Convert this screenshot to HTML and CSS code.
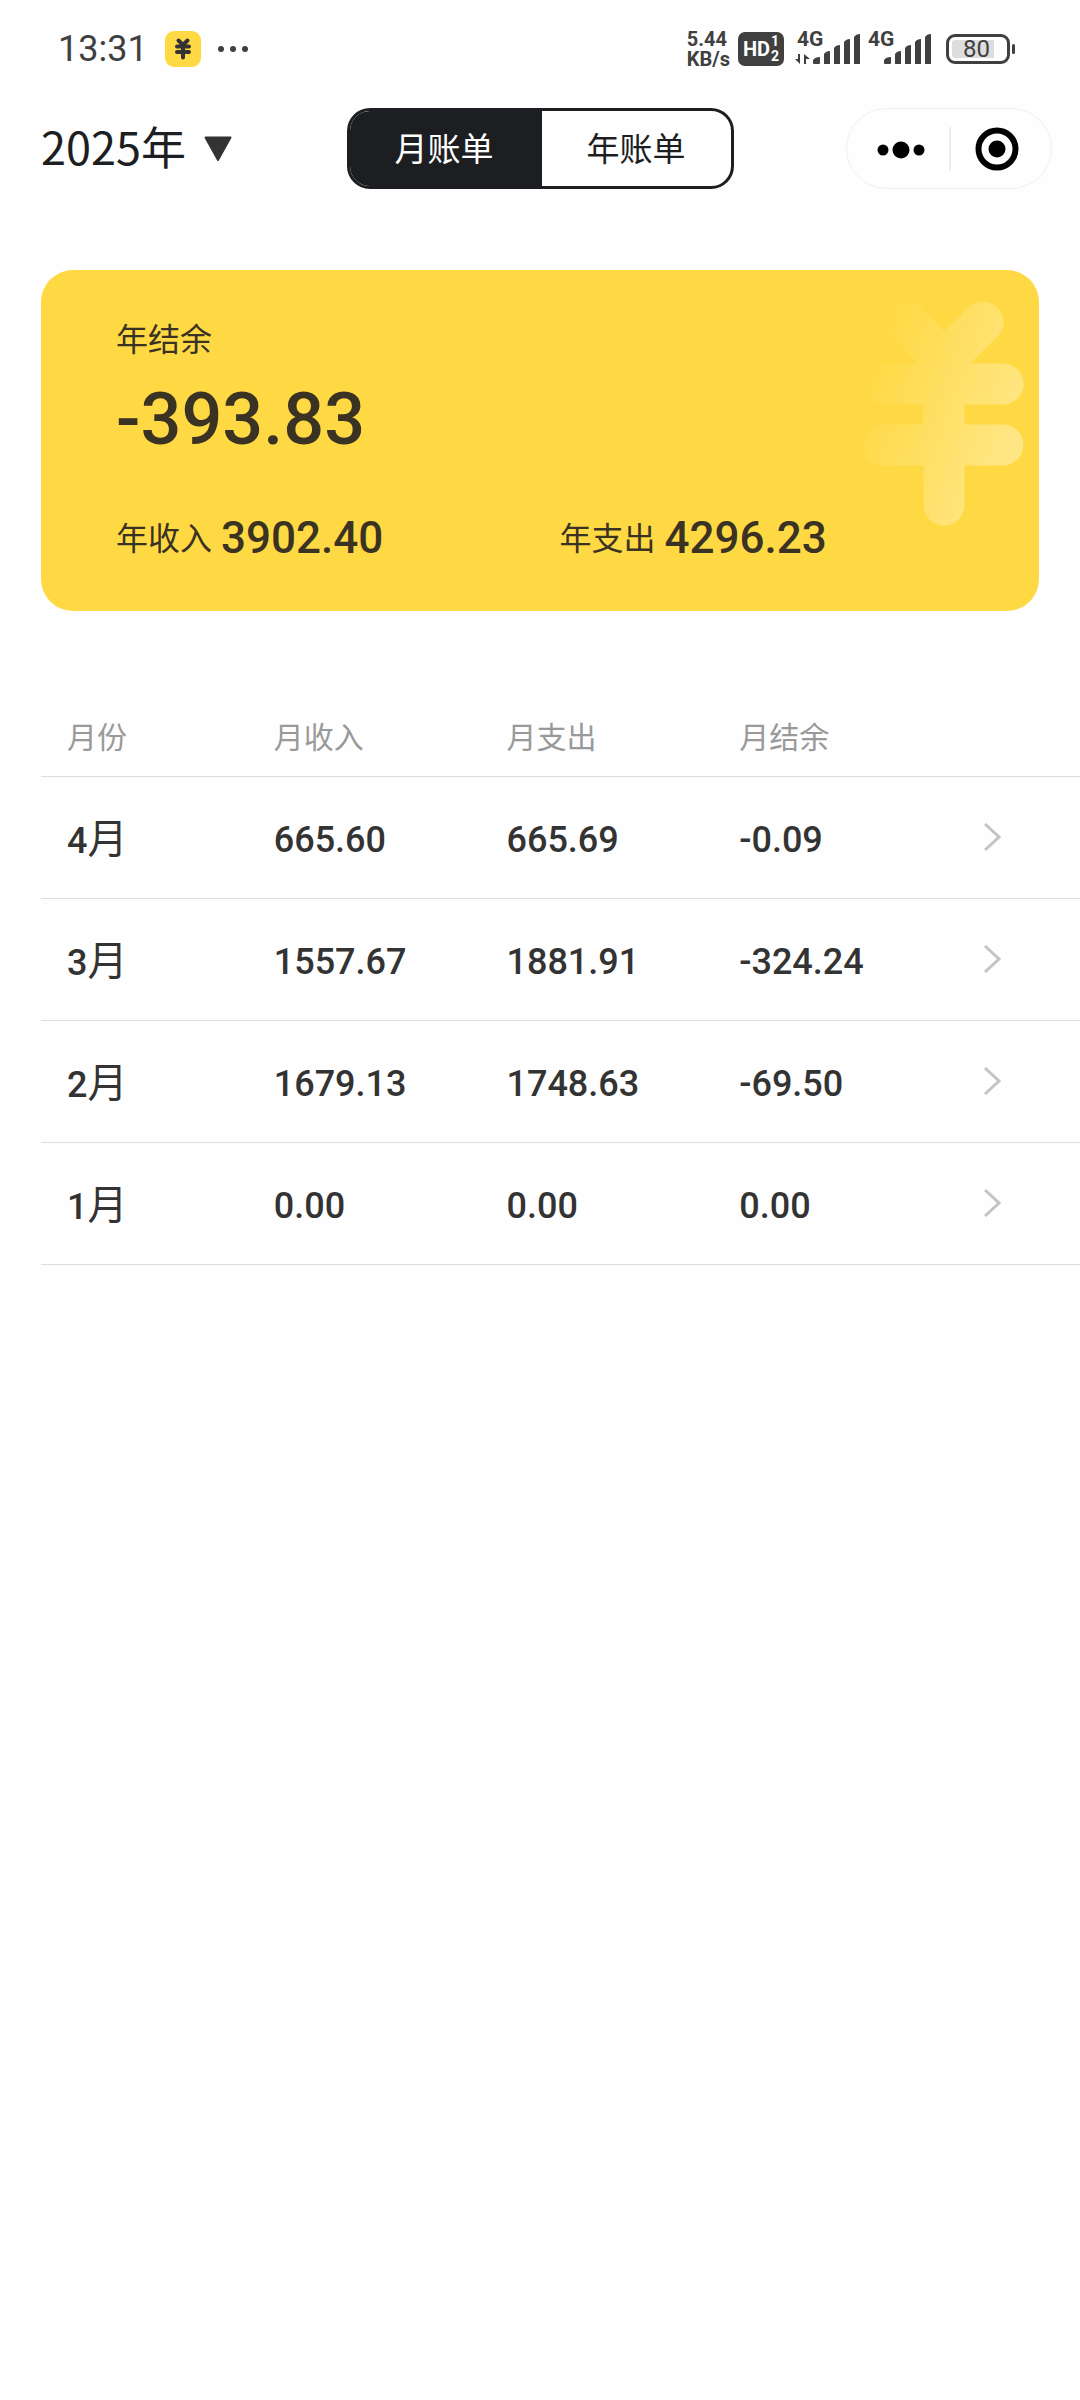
FILE: index.html
```html
<!DOCTYPE html>
<html lang="zh-CN">
<head>
    <meta charset="UTF-8">
    <meta name="viewport" content="width=device-width, initial-scale=1.0">
    <title>账单</title>
    <link rel="stylesheet" href="styles.css">
</head>
<body>
    <!-- Status bar -->
    <div class="status-bar">
        <div class="status-left">
            <span class="clock">13:31</span>
            <svg class="app-icon" width="36" height="36" viewBox="0 0 36 36">
                <rect width="36" height="36" rx="9" fill="#ffd944"/>
                <path d="M13.5 9.5L18 14L22.5 9.5M12 15.5H24M12 21H24M18 14V26.500" fill="none" stroke="#333" stroke-width="4" stroke-linecap="round"/>
            </svg>
            <svg width="32" height="8" viewBox="0 0 32 8" fill="#404040">
                <circle cx="4" cy="4" r="3"/>
                <circle cx="16" cy="4" r="3"/>
                <circle cx="28" cy="4" r="3"/>
            </svg>
        </div>
        <div class="status-right">
            <div class="net-speed"><span>5.44</span><span>KB/s</span></div>
            <div class="hd"><span>HD</span><span class="hd-sim"><span>1</span><span>2</span></span></div>
            <div class="signal">
                <span class="signal-type">4G</span>
                <svg width="66" height="34" viewBox="0 0 66 34" fill="#404040">
                    <path d="M5 22V32L0 27H3V22ZM9 32V22L15 27H11V32Z"/>
                    <path d="M18 31V28Q20 25 25 25V31Q25 32 24 32H19Q18 32 18 31ZM29 22Q31 19 35 19V32H29ZM39 16Q41 13 45 13V32H39ZM49 10Q51 7 55 7V32H49ZM59 5Q61 2 65 2V32H59Z"/>
                </svg>
            </div>
            <div class="signal">
                <span class="signal-type">4G</span>
                <svg width="66" height="34" viewBox="0 0 66 34" fill="#404040">
                    <path d="M18 31V28Q20 25 25 25V31Q25 32 24 32H19Q18 32 18 31ZM29 22Q31 19 35 19V32H29ZM39 16Q41 13 45 13V32H39ZM49 10Q51 7 55 7V32H49ZM59 5Q61 2 65 2V32H59Z"/>
                </svg>
            </div>
            <div class="battery"><span class="battery-level">80</span></div>
        </div>
    </div>

    <!-- Year picker, tabs and capsule menu -->
    <header class="header">
        <label class="year-picker">
            <select aria-label="年份">
                <option>2025年</option>
            </select>
            <svg width="28" height="26" viewBox="0 0 28 26">
                <path d="M1.500 1.500H26.500L14 24Z" fill="#333" stroke="#333" stroke-width="2" stroke-linejoin="round"/>
            </svg>
        </label>
        <div class="tabs">
            <button type="button" class="tab active">月账单</button>
            <button type="button" class="tab">年账单</button>
        </div>
        <div class="capsule">
            <button type="button" class="capsule-btn" aria-label="更多">
                <svg width="48" height="44" viewBox="0 0 48 44">
                    <circle cx="6" cy="23" r="5.500"/>
                    <circle cx="24" cy="23" r="8.500"/>
                    <circle cx="42" cy="23" r="5.500"/>
                </svg>
            </button>
            <button type="button" class="capsule-btn" aria-label="关闭">
                <svg width="44" height="44" viewBox="0 0 44 44">
                    <circle cx="22" cy="22" r="18.500" fill="none" stroke="#000" stroke-width="6"/>
                    <circle cx="22" cy="22" r="8.500"/>
                </svg>
            </button>
        </div>
    </header>

    <main>
        <!-- Year summary -->
        <section class="card">
            <svg class="card-yen" width="160" height="226" viewBox="0 0 160 226">
                <defs>
                    <linearGradient id="yen" gradientUnits="userSpaceOnUse" x1="0" y1="90" x2="145" y2="140">
                        <stop offset="0" stop-color="#fff" stop-opacity="0"/>
                        <stop offset="1" stop-color="#fff" stop-opacity="0.34"/>
                    </linearGradient>
                </defs>
                <path d="M42 21L80 59L119 21M20 83H139M20 144H139M80 59V204" fill="none" stroke="url(#yen)" stroke-width="41" stroke-linecap="round"/>
            </svg>
            <div class="card-label">年结余</div>
            <div class="balance">-393.83</div>
            <div class="totals">
                <div class="total"><span class="card-label">年收入</span><span class="amount">3902.40</span></div>
                <div class="total"><span class="card-label">年支出</span><span class="amount">4296.23</span></div>
            </div>
        </section>

        <!-- Monthly bills -->
        <table class="bills">
            <thead>
                <tr>
                    <th>月份</th>
                    <th>月收入</th>
                    <th>月支出</th>
                    <th>月结余</th>
                    <th></th>
                </tr>
            </thead>
            <tbody>
                <tr>
                    <td class="month">4<span class="unit">月</span></td>
                    <td class="num">665.60</td>
                    <td class="num">665.69</td>
                    <td class="num">-0.09</td>
                    <td><a class="more" href="#" aria-label="4月详情"><svg width="20" height="30" viewBox="0 0 20 30"><path d="M3 2L17 15L3 28"/></svg></a></td>
                </tr>
                <tr>
                    <td class="month">3<span class="unit">月</span></td>
                    <td class="num">1557.67</td>
                    <td class="num">1881.91</td>
                    <td class="num">-324.24</td>
                    <td><a class="more" href="#" aria-label="3月详情"><svg width="20" height="30" viewBox="0 0 20 30"><path d="M3 2L17 15L3 28"/></svg></a></td>
                </tr>
                <tr>
                    <td class="month">2<span class="unit">月</span></td>
                    <td class="num">1679.13</td>
                    <td class="num">1748.63</td>
                    <td class="num">-69.50</td>
                    <td><a class="more" href="#" aria-label="2月详情"><svg width="20" height="30" viewBox="0 0 20 30"><path d="M3 2L17 15L3 28"/></svg></a></td>
                </tr>
                <tr>
                    <td class="month">1<span class="unit">月</span></td>
                    <td class="num">0.00</td>
                    <td class="num">0.00</td>
                    <td class="num">0.00</td>
                    <td><a class="more" href="#" aria-label="1月详情"><svg width="20" height="30" viewBox="0 0 20 30"><path d="M3 2L17 15L3 28"/></svg></a></td>
                </tr>
            </tbody>
        </table>
    </main>
</body>
</html>
```

FILE: styles.css
```css
* {
    box-sizing: border-box;
}
body {
    margin: 0;
    background-color: #fefefe;
    color: #333;
    font-family: "Noto Sans CJK SC", sans-serif;
}
svg {
    display: block;
    flex: none;
}
button, select {
    appearance: none;
    margin: 0;
    padding: 0;
    border: none;
    background: none;
    font-family: inherit;
    cursor: pointer;
}

/* Status bar */
.status-bar {
    display: flex;
    justify-content: space-between;
    align-items: center;
    height: 98px;
    padding: 0 70px 0 58px;
    color: #404040;
    font-family: Roboto, sans-serif;
}
.status-left, .status-right {
    display: flex;
    align-items: center;
}
.clock {
    font-size: 36px;
    line-height: 44px;
}
.app-icon {
    margin: 0 16px 0 17px;
}
.net-speed {
    display: flex;
    flex-direction: column;
    margin-right: 8px;
    font-size: 20px;
    font-weight: 700;
    line-height: 20px;
}
.hd {
    display: flex;
    align-items: center;
    justify-content: center;
    gap: 1px;
    width: 46px;
    height: 34px;
    margin-right: 11px;
    border-radius: 7px;
    background-color: #404040;
    color: #fff;
    font-size: 20px;
    font-weight: 700;
}
.hd-sim {
    display: flex;
    flex-direction: column;
    font-size: 14px;
    line-height: 15px;
}
.signal {
    position: relative;
    margin-right: 5px;
}
.signal-type {
    position: absolute;
    top: -3px;
    left: 2px;
    font-size: 21px;
    font-weight: 700;
    line-height: 20px;
}
.battery {
    position: relative;
    width: 64px;
    height: 30px;
    margin-left: 9px;
    padding: 3px;
    border: 3px solid #404040;
    border-radius: 9px;
}
.battery::after {
    content: '';
    position: absolute;
    top: 7px;
    right: -8px;
    width: 3px;
    height: 10px;
    border-radius: 2px;
    background-color: #404040;
}
.battery-level {
    display: block;
    padding-left: 11px;
    border-radius: 3px;
    background: linear-gradient(to right, #ddd 80%, transparent 80%);
    font-size: 24px;
    line-height: 18px;
}

/* Header */
.header {
    display: grid;
    grid-template-columns: 1fr auto 1fr;
    align-items: center;
    padding: 10px 0;
}
.year-picker {
    display: flex;
    align-items: center;
    gap: 18px;
    padding-left: 41px;
}
.year-picker select {
    padding-bottom: 6px;
    color: #1d1e22;
    font-size: 45px;
    line-height: 64px;
}
.tabs {
    display: flex;
    overflow: hidden;
    border: 3px solid #1d1e22;
    border-radius: 23px;
}
.tab {
    padding: 0 45px 3px;
    color: #1d1e22;
    font-size: 33px;
    line-height: 72px;
}
.tab.active {
    border-right: 3px solid #1d1e22;
    background-color: #1d1e22;
    color: #fff;
}
.capsule {
    display: flex;
    justify-self: end;
    align-items: center;
    height: 81px;
    margin-right: 28px;
    border: 1px solid #f0f0f0;
    border-radius: 41px;
}
.capsule-btn {
    display: flex;
    justify-content: center;
    width: 102px;
    padding-left: 6px;
}
.capsule-btn + .capsule-btn {
    padding: 0 8px 0 0;
    border-left: 2px solid #eee;
}

/* Year summary card */
.card {
    position: relative;
    margin: 71px 41px 0;
    padding: 45px 36px 49px 75px;
    border-radius: 32px;
    background-color: #ffd944;
    color: #3a3222;
}
.card-yen {
    position: absolute;
    top: 31px;
    right: 15px;
}
.card-label {
    font-size: 32px;
    line-height: 44px;
}
.balance {
    font-family: Roboto, sans-serif;
    font-size: 72px;
    font-weight: 500;
    line-height: 122px;
}
.totals {
    display: flex;
    margin-top: 33px;
}
.total {
    display: flex;
    flex: 1;
    gap: 9px;
}
.amount {
    font-family: Roboto, sans-serif;
    font-size: 44px;
    font-weight: 500;
    line-height: 48px;
}

/* Monthly bills table */
.bills {
    width: calc(100% - 41px);
    margin: 90px 0 0 41px;
    border-collapse: collapse;
    table-layout: fixed;
    text-align: left;
}
.bills th, .bills td {
    padding: 0;
    border-bottom: 1px solid #ddd;
}
.bills th {
    width: 22.4%;
    height: 75px;
    padding-bottom: 6px;
    color: #999;
    font-size: 30px;
    font-weight: 400;
}
.bills th:last-child {
    width: auto;
}
.bills th:first-child, .bills .month {
    padding-left: 26px;
}
.bills td {
    height: 122px;
    font-family: Roboto, "Noto Sans CJK SC", sans-serif;
    font-size: 36px;
    font-weight: 500;
}
.bills .month {
    padding-bottom: 2px;
}
.bills .num {
    padding-top: 6px;
}
.unit {
    font-size: 40px;
    font-weight: 400;
}
.more {
    display: block;
    padding-left: 10px;
}
.more path {
    fill: none;
    stroke: #c4c4c4;
    stroke-width: 3;
}
```
